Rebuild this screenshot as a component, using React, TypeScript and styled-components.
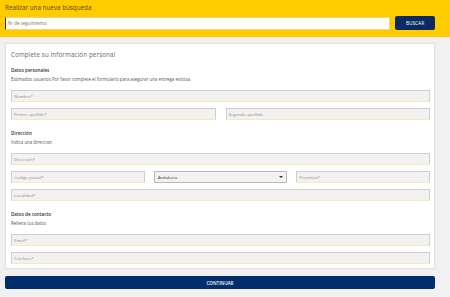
import styled, { createGlobalStyle } from 'styled-components';

const GlobalStyle = createGlobalStyle`
  body {
    margin: 0;
    background: #f1f1f1;
    font-family: 'Open Sans', 'Liberation Sans', sans-serif;
  }
`;

export default function App() {
  return (
    <>
      <GlobalStyle />
      <Header>
        <HeaderTitle>Realizar una nueva búsqueda</HeaderTitle>
        <SearchRow>
          <SearchInput placeholder="Nº de seguimiento" />
          <SearchButton>BUSCAR</SearchButton>
        </SearchRow>
      </Header>
      <Main>
        <Card>
          <CardTitle>Complete su información personal</CardTitle>
          <Section>
            <SectionTitle>Datos personales</SectionTitle>
            <SectionText>
              Estimados usuarios Por favor complete el formulario para asegurar una entrega exitosa.
            </SectionText>
            <Fields>
              <Field placeholder="Nombre*" />
              <Row $cols={2}>
                <Field placeholder="Primer apellido*" />
                <Field placeholder="Segundo apellido" />
              </Row>
            </Fields>
          </Section>
          <Section>
            <SectionTitle>Dirección</SectionTitle>
            <SectionText>Indica una direccion</SectionText>
            <Fields>
              <Field placeholder="Dirección*" />
              <Row $cols={3}>
                <Field placeholder="Codigo postal*" />
                <SelectBox>
                  <span>Andalucia</span>
                  <Caret />
                </SelectBox>
                <Field placeholder="Provincia*" />
              </Row>
              <Field placeholder="Localidad*" />
            </Fields>
          </Section>
          <Section>
            <SectionTitle>Datos de contacto</SectionTitle>
            <SectionText>Rellena tus datos</SectionText>
            <Fields>
              <Field placeholder="Email*" />
              <Field placeholder="Telefono*" />
            </Fields>
          </Section>
        </Card>
        <ContinueButton>CONTINUAR</ContinueButton>
      </Main>
    </>
  );
}

const Header = styled.div`
  background: #ffcc00;
  padding: 4px 15px 7px 5px;
  display: flex;
  flex-direction: column;
  gap: 4px;
`;

const HeaderTitle = styled.div`
  font-size: 6.3px;
  color: #5a4a1a;
  line-height: 8px;
`;

const SearchRow = styled.div`
  display: flex;
  align-items: center;
  gap: 5px;
`;

const SearchInput = styled.input`
  flex: 1;
  height: 13px;
  box-sizing: border-box;
  border: 1px solid #e8d58a;
  background: #fffef6;
  font-size: 4.5px;
  padding: 0 2px;
  font-family: inherit;
  outline: none;
  border-left: 1.5px solid #333;

  &::placeholder {
    color: #777;
  }
`;

const SearchButton = styled.button`
  width: 40px;
  height: 14px;
  background: #0b2a63;
  color: #fff;
  border: none;
  border-radius: 2px;
  font-size: 4.8px;
  font-family: inherit;
  padding: 0;
`;

const Main = styled.div`
  padding: 6px 15px 0 5px;
  display: flex;
  flex-direction: column;
  gap: 7px;
`;

const Card = styled.div`
  background: #fff;
  border: 1px solid #e2e2e2;
  border-radius: 2px;
  padding: 6px 4px 4px 5px;
  display: flex;
  flex-direction: column;
  gap: 10px;
  box-shadow: 0 0 2px rgba(0, 0, 0, 0.06);
`;

const CardTitle = styled.div`
  font-size: 6.2px;
  color: #666;
  letter-spacing: 0.15px;
  line-height: 9px;
  margin-bottom: -2px;
`;

const Section = styled.div`
  display: flex;
  flex-direction: column;
`;

const SectionTitle = styled.div`
  font-size: 4.6px;
  font-weight: 600;
  color: #333;
  line-height: 6px;
  margin-bottom: 3px;
`;

const SectionText = styled.div`
  font-size: 4.4px;
  color: #555;
  line-height: 6px;
  margin-bottom: 8px;
`;

const Fields = styled.div`
  display: flex;
  flex-direction: column;
  gap: 6px;
`;

const Row = styled.div<{ $cols: number }>`
  display: grid;
  grid-template-columns: repeat(${(p) => p.$cols}, 1fr);
  column-gap: ${(p) => (p.$cols === 2 ? 10 : 9)}px;
`;

const Field = styled.input`
  width: 100%;
  height: 12px;
  box-sizing: border-box;
  background: #f4f1f1;
  border: 1px solid #cfcfcf;
  border-bottom: 1px solid #f2ecb5;
  border-radius: 1px;
  font-size: 4.3px;
  font-family: inherit;
  padding: 0 2px;
  outline: none;

  &::placeholder {
    color: #8a8a8a;
  }
`;

const SelectBox = styled.div`
  height: 12px;
  box-sizing: border-box;
  background: #f4f1f1;
  border: 1px solid #b8b8b8;
  border-radius: 1px;
  font-size: 4.3px;
  color: #333;
  padding: 0 3px 0 3px;
  display: flex;
  align-items: center;
  justify-content: space-between;
`;

const Caret = styled.span`
  width: 0;
  height: 0;
  border-left: 2px solid transparent;
  border-right: 2px solid transparent;
  border-top: 2.5px solid #333;
`;

const ContinueButton = styled.button`
  height: 13px;
  background: #002d6b;
  color: #fff;
  border: none;
  border-radius: 2px;
  font-size: 4.6px;
  font-weight: 600;
  font-family: inherit;
  padding: 0;
`;
